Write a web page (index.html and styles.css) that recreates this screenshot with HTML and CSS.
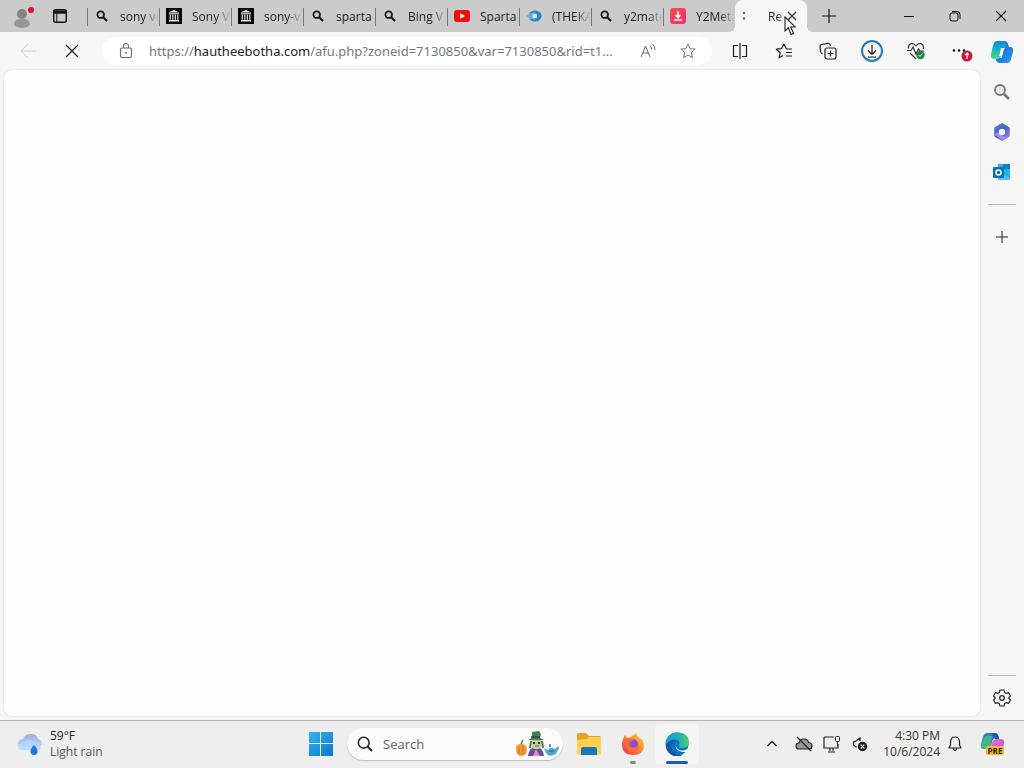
FILE: index.html
```html
<!DOCTYPE html>
<html lang="en">
<head>
<meta charset="utf-8">
<title>Browser</title>
<link rel="stylesheet" href="styles.css">
</head>
<body>
<svg class="defs" aria-hidden="true">
  <symbol id="mag" viewBox="0 0 12 12"><circle cx="4.7" cy="4.7" r="3.3" fill="none" stroke="#151515" stroke-width="1.7"/><path d="M7 7l4 4" stroke="#151515" stroke-width="2.1"/></symbol>
  <symbol id="archive" viewBox="0 0 16 16"><path fill="#050505" d="M0 0h16v16H0z"/><path d="M2.500 4.500L8 2l5.500 2.500zM3 5.200h10v1H3zM3 12h10v1.500H3z" fill="#e8e8e8"/><path d="M4.200 6.500v5.200M6.800 6.500v5.200M9.300 6.500v5.200M11.800 6.500v5.200" stroke="#e8e8e8" stroke-width="1.200"/></symbol>
  <linearGradient id="gBlue" x1="0" y1="0" x2="1" y2="1"><stop offset="0" stop-color="#1b50b8"/><stop offset=".5" stop-color="#1a78e0"/><stop offset="1" stop-color="#2a9cf0"/></linearGradient>
  <linearGradient id="gTeal" x1="0" y1="0" x2="0" y2="1"><stop offset="0" stop-color="#1785dc"/><stop offset=".5" stop-color="#16b6bd"/><stop offset="1" stop-color="#55d894"/></linearGradient>
  <linearGradient id="gWin" x1="0" y1="0" x2="1" y2="1"><stop offset="0" stop-color="#36b4ee"/><stop offset="1" stop-color="#0878c8"/></linearGradient>
  <linearGradient id="gCloud" x1="0" y1="0" x2="0" y2="1"><stop offset="0" stop-color="#a6a9d4"/><stop offset="1" stop-color="#b4dcfb"/></linearGradient>
  <linearGradient id="gHex" x1="0" y1="0" x2="1" y2="1"><stop offset="0" stop-color="#5a78d8"/><stop offset=".5" stop-color="#3468c4"/><stop offset="1" stop-color="#b080ea"/></linearGradient>
  <linearGradient id="gFox" x1="1" y1="0" x2="0" y2="1"><stop offset="0" stop-color="#ffd53c"/><stop offset=".45" stop-color="#ff8c28"/><stop offset="1" stop-color="#f0255c"/></linearGradient>
  <linearGradient id="gEdge" x1="0" y1="0" x2="1" y2="0"><stop offset="0" stop-color="#199ad8"/><stop offset=".6" stop-color="#22b3b5"/><stop offset="1" stop-color="#55d060"/></linearGradient>
  <linearGradient id="gPink" x1="0" y1="0" x2="1" y2="1"><stop offset="0" stop-color="#ee70b0"/><stop offset="1" stop-color="#b557e8"/></linearGradient>
  <linearGradient id="gMeta" x1="0" y1="0" x2="1" y2="1"><stop offset="0" stop-color="#ff4a48"/><stop offset="1" stop-color="#f02d70"/></linearGradient>
</svg>

<header class="titlebar">
  <button class="profile" aria-label="Profile"><svg width="24" height="28" viewBox="0 0 24 28"><circle cx="12" cy="12" r="5" fill="#828282"/><path d="M4 22c0-7 16-7 16 0-1 5-15 5-16 0z" fill="#969696"/><circle cx="21" cy="8" r="3" fill="#dc1420"/></svg></button>
  <button class="actions" aria-label="Tab actions"><svg width="16" height="16" viewBox="0 0 16 16"><rect x="1.700" y="1.700" width="12.600" height="12.600" rx="2" fill="none" stroke="#151515" stroke-width="1.500"/><path d="M1.500 2.500h13v3.200h-13z" fill="#151515"/><path d="M4.800 5v9" stroke="#151515"/></svg></button>
  <nav class="tabs" aria-label="Tabs">
    <button class="tab"><svg class="fav" viewBox="-2 -2 16 16"><use href="#mag" width="12" height="12"/></svg><span>sony ve</span></button>
    <button class="tab"><svg class="fav"><use href="#archive"/></svg><span>Sony V</span></button>
    <button class="tab"><svg class="fav"><use href="#archive"/></svg><span>sony-v</span></button>
    <button class="tab whole"><svg class="fav" viewBox="-2 -2 16 16"><use href="#mag" width="12" height="12"/></svg><span>sparta</span></button>
    <button class="tab"><svg class="fav" viewBox="-2 -2 16 16"><use href="#mag" width="12" height="12"/></svg><span>Bing V</span></button>
    <button class="tab whole"><svg class="fav" viewBox="0 0 16 16"><rect y="2" width="16" height="12" rx="3" fill="#ee1010"/><path d="M6.300 5.300v5.400L11 8z" fill="#fff"/></svg><span>Sparta</span></button>
    <button class="tab"><svg class="fav" viewBox="0 0 16 16"><ellipse cx="9" cy="8" rx="6.500" ry="5.500" fill="#2585c8"/><path d="M0 8c3-2 5-4 9-3.500L11 8l-2 3.500C5 12 3 10 0 8z" fill="#69afe0"/><circle cx="9" cy="8" r="2.300" fill="#edf6fb"/></svg><span>(THEKA</span></button>
    <button class="tab"><svg class="fav" viewBox="-2 -2 16 16"><use href="#mag" width="12" height="12"/></svg><span>y2mate</span></button>
    <button class="tab"><svg class="fav" viewBox="0 0 16 16"><rect width="16" height="16" rx="3" fill="url(#gMeta)"/><path d="M8 3v6M5.500 7L8 9.500 10.500 7M4 12h8" fill="none" stroke="#fff" stroke-width="1.600"/></svg><span>Y2Meta</span></button>
    <button class="tab active"><svg class="fav" viewBox="0 0 16 16"><circle cx="2" cy="5" r="1.300" fill="#66666c"/><circle cx="2" cy="10.500" r="1.300" fill="#66666c"/></svg><span>Re</span><svg class="close" viewBox="0 0 10 10"><path d="M1 1l8 8M9 1L1 9" stroke="#333" stroke-width="1.300"/></svg></button>
  </nav>
  <button class="newtab" aria-label="New tab"><svg width="16" height="16" viewBox="0 0 16 16"><path d="M8 1v14M1 8h14" stroke="#151515" stroke-width="1.200"/></svg></button>
  <div class="winctl">
    <button aria-label="Minimize"><svg width="12" height="12" viewBox="0 0 12 12"><path d="M1 6.500h10" stroke="#111"/></svg></button>
    <button aria-label="Restore"><svg width="12" height="12" viewBox="0 0 12 12"><rect x="1" y="3" width="8" height="8" rx="2" fill="none" stroke="#111"/><path d="M3 1.500h5q3 0 3 3V9" fill="none" stroke="#111"/></svg></button>
    <button aria-label="Close"><svg width="12" height="12" viewBox="0 0 12 12"><path d="M1 1l10 10M11 1L1 11" stroke="#111" stroke-width="1.200"/></svg></button>
  </div>
  <svg class="cursor" viewBox="0 0 12 20" aria-hidden="true"><path d="M1 1v14l3.300-3.200L7 18.500l2.500-1L6.700 11h4.600z" fill="#fff" stroke="#222" stroke-width="1.100"/></svg>
</header>

<div class="browser">
  <div class="pane">
    <div class="toolbar">
      <button class="nav" aria-label="Back" disabled><svg width="16" height="16" viewBox="0 0 16 16"><path d="M16 8H1M8 1L1 8l7 7" fill="none" stroke="#cecece"/></svg></button>
      <button class="nav" aria-label="Stop"><svg width="14" height="14" viewBox="0 0 14 14"><path d="M1 1l12 12M13 1L1 13" stroke="#222" stroke-width="1.200"/></svg></button>
      <div class="address">
        <button class="lock" aria-label="Site information"><svg width="14" height="16" viewBox="0 0 14 16"><rect x="1.500" y="5" width="11" height="9.500" rx="1.500" fill="none" stroke="#6b6b6b" stroke-width="1.100"/><path d="M4.500 5V3a2.500 2.500 0 0 1 5 0v2" fill="none" stroke="#6b6b6b" stroke-width="1.100"/><circle cx="7" cy="9.700" r="1" fill="#6b6b6b"/></svg></button>
        <a class="url" href="#">https://<b>hautheebotha.com</b>/afu.php?zoneid=7130850&amp;var=7130850&amp;rid=t1...</a>
        <button class="tool" aria-label="Read aloud"><svg width="16" height="16" viewBox="0 0 16 16"><path d="M1 14L5.500 3 10 14M2.500 10h6" fill="none" stroke="#666"/><path d="M10 2.500q1.500 1.500 1.500 4M12.500 1q2.500 2.500 2.500 6" fill="none" stroke="#666"/></svg></button>
        <button class="tool" aria-label="Add favorite"><svg width="16" height="16" viewBox="0 0 16 16"><path d="M8 1l2.100 4.600 5.100.6-3.800 3.400 1 5L8 12.100l-4.400 2.500 1-5L.8 6.200l5.100-.6z" fill="none" stroke="#737373" stroke-linejoin="round"/></svg></button>
      </div>
      <div class="tools">
        <button aria-label="Split screen"><svg width="16" height="16" viewBox="0 0 16 16"><path d="M6 2.500H1.500v11H6M10 2.500h4.500v11H10M8 0v16" fill="none" stroke="#191919" stroke-width="1.200"/></svg></button>
        <button aria-label="Favorites"><svg width="18" height="16" viewBox="0 0 18 16"><path d="M17 6h-5.500L9 1 6.400 5.600l-5 .6 3.700 3.600-1 5L8 12.500M11 9.500h6M11 13h6" fill="none" stroke="#222" stroke-width="1.200" stroke-linejoin="round"/></svg></button>
        <button aria-label="Collections"><svg width="18" height="18" viewBox="0 0 18 18"><rect x="6" y="6" width="11" height="11" rx="2" fill="none" stroke="#222" stroke-width="1.200"/><path d="M11.500 8.500v6M8.500 11.500h6M3.500 12Q2 11.500 1.700 10L1 5q-.3-2 1.700-2.500l6-1.200q1.600-.3 2.300 1.200l.4 1.500" fill="none" stroke="#222" stroke-width="1.200"/></svg></button>
        <button aria-label="Downloads"><svg width="24" height="24" viewBox="0 0 24 24"><circle cx="12" cy="12" r="10" fill="none" stroke="#2278b7" stroke-width="2"/><path d="M12 6v9M8 11.500l4 4 4-4M8 18h8" fill="none" stroke="#202020" stroke-width="1.200"/></svg></button>
        <button aria-label="Browser essentials"><svg width="18" height="18" viewBox="0 0 18 18"><path d="M9 4Q7 1 4.300 1.700 1 2.500 1.400 6.500M9 4q2-3 4.700-2.300Q17 2.500 16.500 7M3 11l6 6M0 8.500h4L6 5l3 7 2.500-5 1.500 2h4" fill="none" stroke="#333" stroke-width="1.200"/><circle cx="13.500" cy="13" r="4.200" fill="#20834b"/><path d="M11.500 13l1.500 1.500 2.500-3" fill="none" stroke="#fff"/></svg></button>
        <button aria-label="Settings and more"><svg width="26" height="22" viewBox="0 0 26 22"><circle cx="7" cy="10.500" r="1.200"/><circle cx="12" cy="10.500" r="1.200"/><circle cx="17" cy="10.500" r="1.200"/><circle cx="20" cy="16" r="5.500" fill="#c71737"/><path d="M20 19v-6M18 15l2-2 2 2" fill="none" stroke="#fff" stroke-width="1.200"/></svg></button>
      </div>
    </div>
    <main class="page"></main>
  </div>
  <aside class="sidebar">
    <button class="copilot" aria-label="Copilot"><svg width="24" height="24" viewBox="0 0 24 24"><path d="M14 1q3 0 4 3l1 3h1q4 0 3 5l-2 7q-1 4-4 4H10q-3 0-4-3l-1-3 7 1z" fill="url(#gBlue)"/><path d="M7 1h7q2 0 2.500 3l.5 3q-3 0-4 3l-2 6q-1 3-4 3H4q-4 0-3-5l2-8Q4 1 7 1z" fill="url(#gTeal)"/><path d="M11 8h4q-1 1-1.500 3L12 16H8.500q1-1 1.500-3z" fill="#f2f8fb"/></svg></button>
    <button aria-label="Search"><svg width="18" height="18" viewBox="0 0 18 18"><circle cx="7" cy="7" r="5" fill="#eee" stroke="#777" stroke-width="1.800"/><path d="M11 11l5 5" stroke="#777" stroke-width="2.600"/></svg></button>
    <button aria-label="Microsoft 365"><svg width="18" height="18" viewBox="0 0 18 18"><path d="M9 1l7 4v8l-7 4-7-4V5z" fill="url(#gHex)" stroke="url(#gHex)" stroke-width="1.500" stroke-linejoin="round"/><path d="M2 12q1-3 4-2l3 3q4 1 7 0l-7 4z" fill="#b586e8"/><circle cx="9" cy="9" r="3.200" fill="#f3f5fc"/></svg></button>
    <button aria-label="Outlook"><svg width="18" height="18" viewBox="0 0 18 18"><path d="M5 1h12v15H5z" fill="#26b3e5"/><path d="M10 1h7v5h-7z" fill="#147dc2"/><path d="M5 9l12 6v2H5z" fill="#51c3f0"/><rect y="4" width="11" height="11" rx="1" fill="#0870b8"/><circle cx="5.500" cy="9.500" r="2.500" fill="none" stroke="#fff" stroke-width="1.600"/></svg></button>
    <hr>
    <button class="add" aria-label="Customize"><svg width="12" height="12" viewBox="0 0 12 12"><path d="M6 0v12M0 6h12" stroke="#222"/></svg></button>
    <hr class="push">
    <button class="gear" aria-label="Settings"><svg width="18" height="18" viewBox="0 0 18 18"><path d="M7 1h4l.7 2.500 1.500.8 2.300-.7 2 3.400-1.800 1.800v.4l1.800 1.800-2 3.400-2.300-.7-1.500.8L11 17H7l-.7-2.500-1.500-.8-2.300.7-2-3.400 1.800-1.800v-.4L.5 7l2-3.400 2.300.7 1.500-.8z" fill="none" stroke="#222" stroke-width="1.200" stroke-linejoin="round"/><circle cx="9" cy="9" r="2.300" fill="none" stroke="#222" stroke-width="1.200"/></svg></button>
  </aside>
</div>

<footer class="taskbar">
  <button class="weather"><svg width="28" height="24" viewBox="0 0 28 24"><path d="M5 15q-4-1-3-4 1-4 5-4 2-5 8-5t7 5q4 1 4 4t-4 4z" fill="url(#gCloud)"/><path d="M5 18q-3 0-3-4 1-3 5-3 2-3 6-3 5 0 6 4 5 0 6 3 0 3-4 3z" fill="#b3d7ff" opacity=".85"/><path d="M18 13q4 4 3.500 7-.5 3-3.500 3t-3.500-3q-.5-3 3.500-7z" fill="#2377dc"/></svg><span><strong>59°F</strong><small>Light rain</small></span></button>
  <div class="apps">
    <button class="start" aria-label="Start"><svg width="24" height="24" viewBox="0 0 24 24"><path d="M0 0h11v11H0zM12 0h12v11H12zM0 12h11v12H0zM12 12h12v12H12z" fill="url(#gWin)"/></svg></button>
    <div class="search">
      <svg width="16" height="16" viewBox="0 0 16 16"><circle cx="6.700" cy="6.700" r="5.400" fill="none" stroke="#292929" stroke-width="1.600"/><path d="M10.500 10.500L15 15" stroke="#292929" stroke-width="1.800"/></svg>
      <input type="text" placeholder="Search" aria-label="Search">
      <svg width="44" height="26" viewBox="0 0 44 26"><path d="M1 17q0-4 5-4 6 0 6 5 0 7-6 7-5 0-5-8z" fill="#f39a35"/><path d="M4 16v7M8 15v8" stroke="#d86b22"/><path d="M6 13l2-4" stroke="#5c8048" stroke-width="1.500"/><path d="M13 25q1-9 8-9t8 9z" fill="#5c50a0"/><path d="M18 25l3-7 4 7z" fill="#e889ad"/><rect x="17" y="8" width="9" height="10" rx="3" fill="#c3cf92"/><path d="M16 10l-1 7M27 10l1 7" stroke="#5b7459" stroke-width="2"/><path d="M13 9l4-2V1l7-1 2 3-1 4 4 2z" fill="#477e55"/><path d="M16 6h9" stroke="#2a4a42" stroke-width="1.500"/><circle cx="19" cy="12" r="1"/><circle cx="24" cy="12" r="1"/><path d="M20 15h4" stroke="#90544e"/><path d="M29 17l4 2q3-4 7-1l3-3 1 2-3 6q-7 4-10-1z" fill="#4eabd0"/><path d="M35 16v-3M34 20h5" stroke="#287aa3" stroke-width="1.500"/></svg>
    </div>
    <button class="app" aria-label="File Explorer"><svg width="26" height="24" viewBox="0 0 26 24"><path d="M1 2q0-1 2-1h7l3 3h10q2 0 2 2v14H1z" fill="#e4a325"/><path d="M1 8l10-1 2-2h12v16q0 2-2 2H3q-2 0-2-2z" fill="#fed250"/><path d="M5 17q0-2 2-2h12q2 0 2 2v6H5z" fill="#1976bb"/></svg></button>
    <button class="app running" aria-label="Firefox"><svg width="24" height="24" viewBox="0 0 24 24"><path d="M2 7l2-4 2 3 4-1 5-4q0 3 4 5 4 3 4 7 0 10-11 10Q1 23 1 12q0-3 1-5z" fill="url(#gFox)"/><circle cx="12" cy="12" r="5" fill="#8651d0"/><path d="M4 7q5-2 9 1l-4 2q-2 3 1 5 5 2 8-3 0 9-7 8-7-1-7-13z" fill="#ff6a35"/></svg></button>
    <button class="app current" aria-label="Microsoft Edge"><svg width="24" height="24" viewBox="0 0 24 24"><circle cx="12" cy="12" r="11.500" fill="#1172c2"/><path d="M1 10Q3 0 13 .5 24 1 24 11q-1 5-7 5-4 0-3-3 2-4-2-5-6-2-11 4z" fill="url(#gEdge)"/><path d="M10 8q-6 5-2 11 4 6 11 3-9 6-16-2-5-7 2-11 3-2 5-1z" fill="#1558a6"/><path d="M12 10q-3 4 1 7 4 3 9 0l2 0-1 3q-2 0-4 0-6 0-8-4-1-3 1-6z" fill="#eef5f8"/></svg></button>
  </div>
  <div class="tray">
    <button aria-label="Show hidden icons"><svg width="12" height="12" viewBox="0 0 12 12"><path d="M1.500 8L6 3.500 10.500 8" fill="none" stroke="#222" stroke-width="1.400"/></svg></button>
    <button aria-label="OneDrive"><svg width="18" height="16" viewBox="0 0 18 16"><path d="M4 13Q1 13 1 10q0-3 3-3 1-4 5-4 4 0 4.500 3.500Q17 7 17 10q0 3-3 3z" fill="#999" stroke="#222" stroke-width="1.200"/><path d="M2 1l14 14" stroke="#222" stroke-width="1.300"/></svg></button>
    <button aria-label="Network"><svg width="18" height="18" viewBox="0 0 18 18"><path d="M11 2H2Q1 2 1 3v10h14V9M5 17h7M7 13v3M10 13v3" fill="none" stroke="#252525" stroke-width="1.200"/><rect x="12.500" y="1.500" width="4" height="5" rx="1" fill="none" stroke="#252525"/><path d="M14.500 6v5" stroke="#252525"/></svg></button>
    <button aria-label="Volume muted"><svg width="16" height="16" viewBox="0 0 16 16"><path d="M5 11H4L1.500 9V6L4 5l4-3v3" fill="none" stroke="#252525" stroke-width="1.200"/><circle cx="10.500" cy="10.500" r="4.700" fill="#1b1b1b"/><path d="M8.700 8.700l3.600 3.600M12.300 8.700l-3.600 3.600" stroke="#fff" stroke-width="1.200"/></svg></button>
    <button class="clock"><span>4:30 PM</span><span>10/6/2024</span></button>
    <button class="bell" aria-label="Notifications"><svg width="14" height="16" viewBox="0 0 14 16"><path d="M1 12l1.500-3V6q0-5 4.500-5t4.500 5v3l1.500 3zM5 12.500q2 4 4 0" fill="none" stroke="#222" stroke-width="1.200" stroke-linejoin="round"/></svg></button>
    <button class="pre" aria-label="Copilot preview"><svg width="26" height="26" viewBox="0 0 26 26"><path d="M8 2h7q3 0 4 5h-3q-3 0-4 4l-2 7H4q-4 0-3-5l2-7Q4 2 8 2z" fill="#2679cb"/><path d="M4 7q3-4 8-2l-2 13H4q-4 0-3-5z" fill="#45b689"/><path d="M15 2q3 0 4 6h-4l-3-6z" fill="#1957a6"/><path d="M17 8h4q4 0 3 5l-2 7H10l2-8q1-4 5-4z" fill="url(#gPink)"/><rect x="6" y="15" width="18" height="9" rx="2" fill="#f5b925"/><text x="15" y="22.500" text-anchor="middle">PRE</text></svg></button>
  </div>
</footer>
</body>
</html>
```
FILE: styles.css
```css
* { box-sizing: border-box; }

body {
  margin: 0;
  min-height: 100vh;
  display: grid;
  grid-template-rows: 32px 1fr 48px;
  grid-template-columns: minmax(0, 1fr);
  background: #f6f6f6;
  color: #222;
  font-family: "Open Sans", "Noto Sans", sans-serif;
  font-size: 12px;
}

button {
  display: flex;
  align-items: center;
  justify-content: center;
  flex: none;
  margin: 0;
  padding: 0;
  border: 0;
  background: none;
  color: inherit;
  font: inherit;
}

svg { display: block; flex: none; }
.defs { position: absolute; width: 0; height: 0; }

.titlebar {
  position: relative;
  display: flex;
  background: #cbcbcb;
}
.profile { width: 44px; }
.actions { width: 32px; }
.tabs { display: flex; padding-left: 11px; }
.tab {
  width: 72px;
  justify-content: flex-start;
  gap: 10px;
  padding-left: 7px;
  background: linear-gradient(#777, #777) 0 8px / 1px 18px no-repeat;
}
.tab span {
  flex: 1;
  min-width: 0;
  overflow: hidden;
  white-space: nowrap;
  text-align: left;
  mask-image: linear-gradient(90deg, #000 60%, transparent);
}
.tab.whole span { mask-image: none; }
.fav { width: 16px; height: 16px; }
.tab.active {
  position: relative;
  background: #f6f6f6;
  border-radius: 8px 8px 0 0;
  padding-right: 10px;
}
.tab.active::before,
.tab.active::after {
  content: "";
  position: absolute;
  bottom: 0;
  width: 6px;
  height: 6px;
}
.tab.active::before {
  right: 100%;
  background: radial-gradient(circle at 0 0, transparent 6px, #f6f6f6 6px);
}
.tab.active::after {
  left: 100%;
  background: radial-gradient(circle at 100% 0, transparent 6px, #f6f6f6 6px);
}
.close { width: 10px; height: 10px; margin-left: -8px; }
.newtab { width: 44px; }
.winctl { display: flex; margin-left: auto; }
.winctl button { width: 46px; }
.cursor {
  position: absolute;
  left: 784px;
  top: 16px;
  width: 12px;
  height: 20px;
}

.browser { display: flex; }
.pane {
  flex: 1;
  min-width: 0;
  display: flex;
  flex-direction: column;
  padding: 0 0 4px 4px;
}
.toolbar {
  display: flex;
  align-items: center;
  height: 38px;
  padding-left: 2px;
}
.nav { width: 44px; height: 32px; }
.address {
  flex: 1;
  min-width: 0;
  display: flex;
  align-items: center;
  height: 28px;
  margin-left: 8px;
  padding: 0 4px;
  border-radius: 14px;
  background: #fff;
}
.lock { width: 40px; margin-right: 3px; }
.url {
  flex: 1;
  min-width: 0;
  white-space: nowrap;
  color: #777;
  font-family: "Noto Sans", "Open Sans", sans-serif;
  font-size: 13px;
  text-decoration: none;
}
.url b { color: #222; font-weight: 400; }
.tool { width: 40px; }
.tools { display: flex; padding-left: 6px; margin-right: -2px; }
.tools button { width: 44px; height: 32px; }
.page {
  flex: 1;
  border-radius: 8px;
  background: #fefefe;
  box-shadow: 0 0 2px #ccc;
}

.sidebar {
  width: 44px;
  display: flex;
  flex-direction: column;
  align-items: center;
}
.sidebar button { width: 40px; height: 40px; }
.sidebar .gear { height: 44px; }
.sidebar hr {
  width: 28px;
  height: 1px;
  margin: 12px 0;
  border: 0;
  background: #b5b5b5;
}
.sidebar .push { margin: auto 0 0; }

.taskbar {
  display: grid;
  grid-template-columns: 1fr auto 1fr;
  padding-bottom: 2px;
  border-top: 1px solid #b0b0b0;
  background: #eee;
}
.weather {
  justify-self: start;
  gap: 6px;
  padding-left: 16px;
  text-align: left;
}
.weather span { display: flex; flex-direction: column; }
.weather strong { font-weight: 400; line-height: 16px; }
.weather small { font-size: 12px; line-height: 16px; color: #555; }
.apps { display: flex; align-items: center; margin-right: 26px; }
.start { width: 44px; height: 44px; margin-right: 4px; }
.search {
  display: flex;
  align-items: center;
  gap: 10px;
  width: 216px;
  height: 32px;
  margin-right: 4px;
  padding: 0 4px 0 10px;
  border-radius: 16px;
  background: #fafafa;
  box-shadow: 0 1px 1px #bbb;
}
.search input {
  flex: 1;
  min-width: 0;
  padding: 0;
  border: 0;
  outline: 0;
  background: none;
  font: inherit;
  font-size: 13px;
}
.search input::placeholder { color: #606060; opacity: 1; }
.app { position: relative; width: 44px; height: 40px; border-radius: 4px; }
.current { background: #f4f4f4; }
.running::after,
.current::after {
  content: "";
  position: absolute;
  bottom: 0;
  width: 6px;
  height: 3px;
  border-radius: 2px;
  background: #888;
}
.current::after { width: 22px; background: #1663b5; }
.tray {
  display: flex;
  align-items: center;
  justify-content: flex-end;
  padding-right: 18px;
}
.tray button { width: 28px; height: 40px; }
.tray button:first-child { width: 36px; }
.tray .clock {
  width: 66px;
  flex-direction: column;
  align-items: flex-end;
  line-height: 16px;
  color: #333;
}
.tray .bell { width: 30px; }
.tray .pre { width: 26px; margin-left: 10px; }
.pre text { font: 700 8px "Open Sans", sans-serif; fill: #302313; }
```
